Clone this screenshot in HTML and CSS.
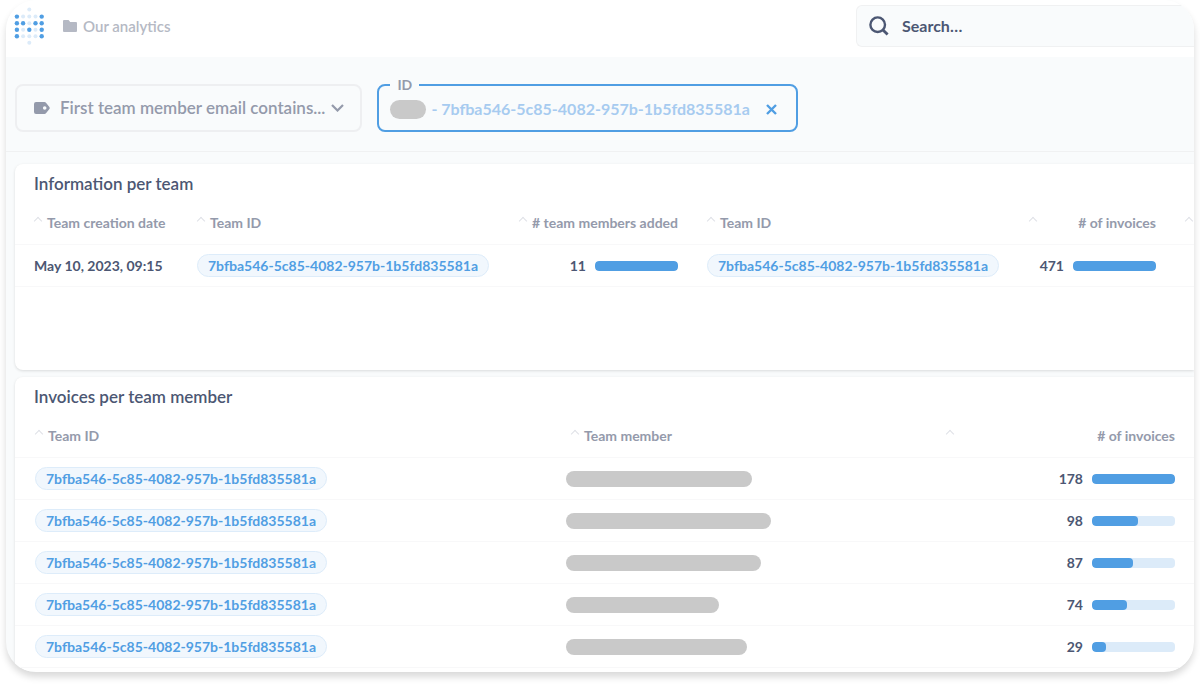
FILE: index.html
```html
<!DOCTYPE html>
<html lang="en">
<head>
    <meta charset="UTF-8">
    <meta name="viewport" content="width=device-width, initial-scale=1.0">
    <title>Our analytics</title>
    <link rel="stylesheet" href="styles.css">
</head>
<body>
    <div class="app">
        <header class="header">
            <a class="logo" href="#" aria-label="Home">
                <svg width="30" height="38" viewBox="0 0 30 38">
                    <g fill="#509ee3">
                        <circle cx="2.9" cy="9.6" r="2.2"/><circle cx="27.7" cy="9.6" r="2.2"/>
                        <circle cx="2.9" cy="16.2" r="2.2"/><circle cx="9.1" cy="16.2" r="2.2"/><circle cx="21.5" cy="16.2" r="2.2"/><circle cx="27.7" cy="16.2" r="2.2"/>
                        <circle cx="2.9" cy="22.8" r="2.2"/><circle cx="15.3" cy="22.8" r="2.2"/><circle cx="27.7" cy="22.8" r="2.2"/>
                        <circle cx="2.9" cy="29.2" r="2.2"/><circle cx="27.7" cy="29.2" r="2.2"/>
                    </g>
                    <g fill="#dcebf9">
                        <circle cx="15.3" cy="2.5" r="2"/>
                        <circle cx="9.1" cy="9.6" r="2"/><circle cx="15.3" cy="9.6" r="2"/><circle cx="21.5" cy="9.6" r="2"/>
                        <circle cx="15.3" cy="16.2" r="2"/>
                        <circle cx="9.1" cy="22.8" r="2"/><circle cx="21.5" cy="22.8" r="2"/>
                        <circle cx="9.1" cy="29.2" r="2"/><circle cx="15.3" cy="29.2" r="2"/><circle cx="21.5" cy="29.2" r="2"/>
                        <circle cx="15.3" cy="35.8" r="2"/>
                    </g>
                </svg>
            </a>
            <a class="collection" href="#">
                <svg width="14" height="12" viewBox="0 0 14 12" fill="currentColor"><path d="M1 0h4.6l1.6 2H13a1 1 0 0 1 1 1v8a1 1 0 0 1-1 1H1a1 1 0 0 1-1-1V1a1 1 0 0 1 1-1z"/></svg>
                Our analytics
            </a>
            <label class="search">
                <svg width="20" height="20" viewBox="0 0 20 20" fill="none" stroke="currentColor"><circle cx="8.7" cy="8.7" r="7.3" stroke-width="2.4"/><path d="M14 14l4.6 4.6" stroke-width="2.8"/></svg>
                <input class="search-input" type="text" placeholder="Search…" aria-label="Search">
            </label>
        </header>

        <div class="filters">
            <button class="filter" type="button">
                <svg width="16" height="12" viewBox="0 0 16 12" fill="currentColor"><path fill-rule="evenodd" d="M2 0h8.5a2 2 0 0 1 1.5.7l3.2 4a2 2 0 0 1 0 2.6l-3.2 4a2 2 0 0 1-1.5.7H2a2 2 0 0 1-2-2V2a2 2 0 0 1 2-2zm8.7 4.2a1.8 1.8 0 1 0 0 3.6 1.8 1.8 0 0 0 0-3.6z"/></svg>
                <span class="filter-name">First team member email contains...</span>
                <svg width="13" height="8" viewBox="0 0 13 8" fill="none" stroke="currentColor" stroke-width="2.2"><path d="M1 1l5.5 5.5L12 1"/></svg>
            </button>
            <fieldset class="filter-active">
                <legend>ID</legend>
                <span class="masked masked-id"></span>
                <span class="filter-value">- 7bfba546-5c85-4082-957b-1b5fd835581a</span>
                <button class="clear" type="button" aria-label="Clear">
                    <svg width="11" height="11" viewBox="0 0 11 11" stroke="currentColor" stroke-width="2.4"><path d="M1 1l9 9M10 1l-9 9"/></svg>
                </button>
            </fieldset>
        </div>

        <main class="dashboard">
            <section class="card card-team">
                <h2>Information per team</h2>
                <table>
                    <colgroup>
                        <col class="col-date"><col class="col-id"><col class="col-members"><col class="col-id"><col class="col-count"><col>
                    </colgroup>
                    <thead>
                        <tr>
                            <th><div class="head"><i class="caret"></i>Team creation date</div></th>
                            <th><div class="head"><i class="caret"></i>Team ID</div></th>
                            <th><div class="head number"><i class="caret"></i># team members added</div></th>
                            <th><div class="head"><i class="caret"></i>Team ID</div></th>
                            <th><div class="head number"><i class="caret"></i># of invoices</div></th>
                            <th><div class="head"><i class="caret"></i></div></th>
                        </tr>
                    </thead>
                    <tbody>
                        <tr>
                            <td>May 10, 2023, 09:15</td>
                            <td><a class="pill" href="#">7bfba546-5c85-4082-957b-1b5fd835581a</a></td>
                            <td><div class="amount">11<span class="bar"><span class="bar-fill" style="width: 100%"></span></span></div></td>
                            <td><a class="pill" href="#">7bfba546-5c85-4082-957b-1b5fd835581a</a></td>
                            <td><div class="amount">471<span class="bar"><span class="bar-fill" style="width: 100%"></span></span></div></td>
                            <td></td>
                        </tr>
                    </tbody>
                </table>
            </section>

            <section class="card card-members">
                <h2>Invoices per team member</h2>
                <table>
                    <colgroup>
                        <col class="col-team"><col class="col-member"><col class="col-invoices">
                    </colgroup>
                    <thead>
                        <tr>
                            <th><div class="head"><i class="caret"></i>Team ID</div></th>
                            <th><div class="head head-member"><i class="caret"></i>Team member</div></th>
                            <th><div class="head number"><i class="caret"></i># of invoices</div></th>
                        </tr>
                    </thead>
                    <tbody>
                        <tr>
                            <td><a class="pill" href="#">7bfba546-5c85-4082-957b-1b5fd835581a</a></td>
                            <td><span class="masked masked-1"></span></td>
                            <td><div class="amount">178<span class="bar"><span class="bar-fill" style="width: 100%"></span></span></div></td>
                        </tr>
                        <tr>
                            <td><a class="pill" href="#">7bfba546-5c85-4082-957b-1b5fd835581a</a></td>
                            <td><span class="masked masked-2"></span></td>
                            <td><div class="amount">98<span class="bar"><span class="bar-fill" style="width: 55%"></span></span></div></td>
                        </tr>
                        <tr>
                            <td><a class="pill" href="#">7bfba546-5c85-4082-957b-1b5fd835581a</a></td>
                            <td><span class="masked masked-3"></span></td>
                            <td><div class="amount">87<span class="bar"><span class="bar-fill" style="width: 49%"></span></span></div></td>
                        </tr>
                        <tr>
                            <td><a class="pill" href="#">7bfba546-5c85-4082-957b-1b5fd835581a</a></td>
                            <td><span class="masked masked-4"></span></td>
                            <td><div class="amount">74<span class="bar"><span class="bar-fill" style="width: 42%"></span></span></div></td>
                        </tr>
                        <tr>
                            <td><a class="pill" href="#">7bfba546-5c85-4082-957b-1b5fd835581a</a></td>
                            <td><span class="masked masked-5"></span></td>
                            <td><div class="amount">29<span class="bar"><span class="bar-fill" style="width: 17%"></span></span></div></td>
                        </tr>
                    </tbody>
                </table>
            </section>
        </main>
    </div>
</body>
</html>
```
FILE: styles.css
```css
* {
    box-sizing: border-box;
}
body {
    margin: 0;
    background-color: #fff;
    color: #4c5773;
    font-family: Lato, sans-serif;
    font-size: 14px;
    font-weight: 700;
    line-height: 20px;
}
a {
    text-decoration: none;
}
svg {
    flex: none;
}
.app {
    margin: 0 6px 12px;
    overflow: hidden;
    border-radius: 30px;
    background-color: #f9fbfc;
    box-shadow: 0 5px 7px rgba(0, 0, 0, 0.15);
}

/* header */
.header {
    display: flex;
    align-items: center;
    padding: 5px 0 10px 8px;
    background-color: #fff;
}
.logo {
    display: flex;
    margin-right: 19px;
}
.collection {
    display: flex;
    align-items: center;
    gap: 6px;
    color: #b5b9c4;
    font-size: 15px;
    font-weight: 600;
}
.search {
    display: flex;
    align-items: center;
    gap: 13px;
    width: 338px;
    height: 42px;
    margin-left: auto;
    padding-left: 12px;
    border: 1px solid #f0f1f2;
    border-right: none;
    border-radius: 6px 0 0 6px;
    background-color: #f9fbfc;
}
.search-input {
    flex: 1;
    min-width: 0;
    padding: 0;
    border: none;
    outline: none;
    background: none;
    color: inherit;
    font: inherit;
    font-size: 16px;
}
.search-input::placeholder {
    color: #4c5773;
    opacity: 1;
}

/* filters */
.filters {
    display: flex;
    align-items: flex-end;
    gap: 15px;
    padding: 21px 9px 19px;
    border-bottom: 1px solid #f0f1f2;
}
.filter {
    display: flex;
    align-items: center;
    height: 48px;
    padding: 0 16px 0 17px;
    border: 2px solid #eeeff1;
    border-radius: 8px;
    background: none;
    color: #949aab;
    font: inherit;
    font-size: 17px;
    font-weight: 600;
    cursor: pointer;
}
.filter-name {
    margin: 0 6px 0 10px;
}
.filter-active {
    display: flex;
    align-items: center;
    height: 54px;
    min-width: 0;
    margin: 0;
    padding: 0 19px 4px 11px;
    border: 2px solid #509ee3;
    border-radius: 8px;
    color: #a7cbf0;
    font-size: 16px;
}
.filter-active legend {
    padding: 0 7px;
    color: #949aab;
    font-size: 14px;
    line-height: 14px;
}
.filter-value {
    margin: 0 16px 0 5px;
}
.clear {
    display: flex;
    padding: 0;
    border: none;
    background: none;
    color: #509ee3;
    cursor: pointer;
}
.masked {
    display: block;
    height: 16px;
    border-radius: 8px;
    background-color: #c9c9c9;
}
.masked-id {
    width: 36px;
    height: 19px;
    border-radius: 10px;
}
.masked-1 {
    width: 186px;
}
.masked-2 {
    width: 205px;
}
.masked-3 {
    width: 195px;
}
.masked-4 {
    width: 153px;
}
.masked-5 {
    width: 181px;
}

/* cards */
.dashboard {
    display: grid;
    gap: 7px;
    padding: 12px 0 0 9px;
}
.card {
    min-width: 0;
    padding-top: 10px;
    border-radius: 8px 0 0 8px;
    background-color: #fff;
    box-shadow: 0 1px 3px rgba(0, 0, 0, 0.13);
}
.card-team {
    padding-bottom: 83px;
}
.card-members {
    padding-bottom: 4px;
}
.card h2 {
    margin: 0;
    padding-left: 19px;
    font-size: 17px;
    font-weight: 600;
    line-height: 20px;
}
table {
    width: 100%;
    border-collapse: separate;
    border-spacing: 0;
    table-layout: fixed;
}
th,
td {
    padding: 0;
    border-bottom: 1px solid #f8f8f9;
    text-align: left;
    white-space: nowrap;
}
th {
    height: 51px;
    padding-top: 8px;
    color: #949aab;
}
td {
    height: 42px;
}
th:first-child,
td:first-child {
    padding-left: 19px;
}
.card-members th:first-child,
.card-members td:first-child {
    padding-left: 20px;
}
.card-members .head-member {
    padding-left: 5px;
}
.col-date {
    width: 182px;
}
.col-id {
    width: 322px;
}
.col-members {
    width: 188px;
}
.col-count {
    width: 156px;
}
.col-team {
    width: 551px;
}
.col-invoices {
    width: 248px;
}
.head {
    display: flex;
    align-items: center;
    gap: 5px;
}
.number {
    justify-content: space-between;
}
.number,
.amount {
    padding-right: 29px;
}
.card-members .number,
.card-members .amount {
    padding-right: 19px;
}
.caret {
    flex: none;
    width: 6px;
    height: 6px;
    margin: 0 1px 4px;
    border-top: 1px solid #dfe1e6;
    border-left: 1px solid #dfe1e6;
    transform: rotate(45deg);
}
.pill {
    display: inline-block;
    padding: 0 10px;
    border: 1px solid #ddecfa;
    border-radius: 12px;
    background-color: #f1f7fd;
    color: #509ee3;
    line-height: 21px;
}
.amount {
    display: flex;
    align-items: center;
    justify-content: flex-end;
    gap: 9px;
}
.bar {
    width: 83px;
    height: 10px;
    overflow: hidden;
    border-radius: 4px;
    background-color: #dcebf9;
}
.bar-fill {
    display: block;
    height: 10px;
    border-radius: 4px;
    background-color: #509ee3;
}
```
